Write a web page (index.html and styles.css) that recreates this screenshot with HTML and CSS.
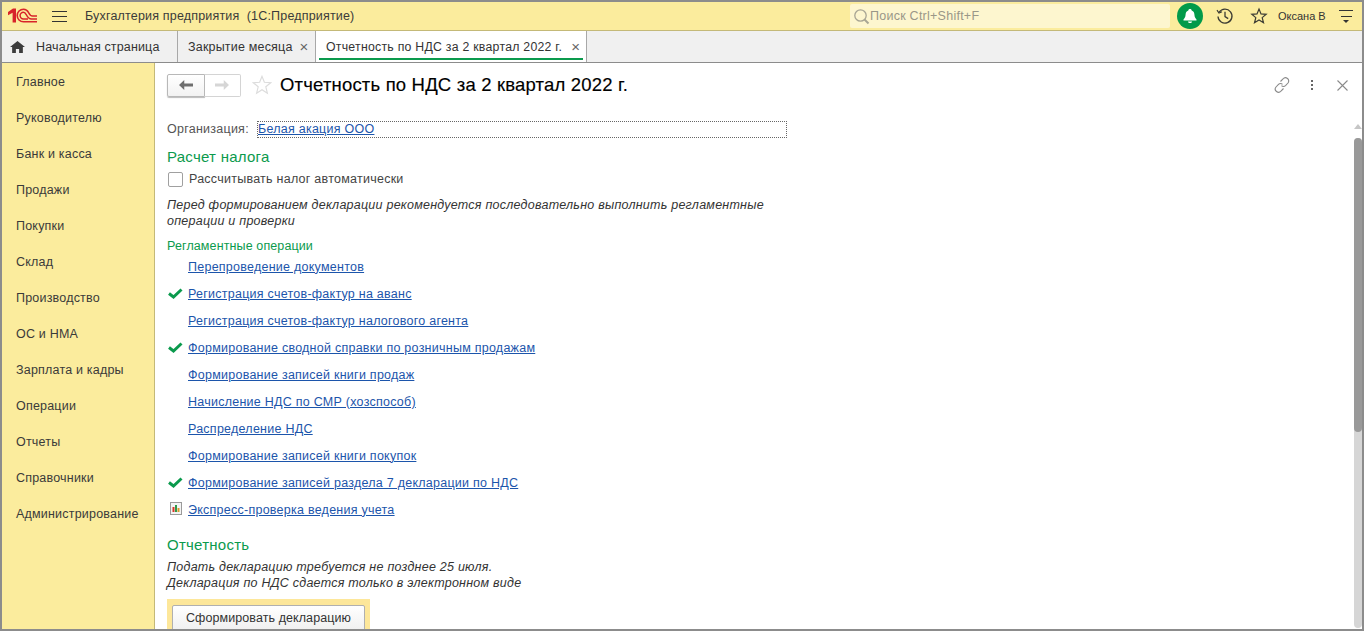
FILE: index.html
```html
<!DOCTYPE html>
<html>
<head>
  <meta charset="utf-8">
  <title>Отчетность по НДС</title>
  <link rel="stylesheet" href="styles.css">
</head>
<body>
  <div class="app">
    <div class="topbar">
      <svg class="logo" width="30" height="16" viewBox="0 0 30 16">
        <path d="M0 4 L5 .5 H8 V14.5 H4.6 V4.8 L0 7.2 Z" fill="#d8232a"/>
        <path d="M29 13.8 H15.5 A6.3 6.3 0 0 1 15.5 1.2 C18 1.2 19.5 2.5 20.5 4.5 C21.5 6.5 22.5 8 24.5 8 H29" fill="none" stroke="#d8232a" stroke-width="1.6"/>
        <path d="M29 11 H23.5 C21 11 19.5 9 18.5 7 C17.5 5.2 17 4.2 15.5 4.2 A3.4 3.4 0 0 0 15.5 11 H20" fill="none" stroke="#d8232a" stroke-width="1.5"/>
      </svg>
      <div class="burger"><span></span><span></span><span></span></div>
      <div class="app-title">Бухгалтерия предприятия&nbsp; (1С:Предприятие)</div>
      <div class="search">
        <svg width="17" height="17" viewBox="0 0 17 17"><circle cx="7.5" cy="7.5" r="5.7" fill="none" stroke="#a8a594" stroke-width="1.3"/><path d="M11.5 11.5 L15.5 15.5" stroke="#a8a594" stroke-width="2"/></svg>
        <span>Поиск Ctrl+Shift+F</span>
      </div>
      <div class="bell">
        <svg width="16" height="16" viewBox="0 0 16 16"><path d="M8 1 C9 1 9.6 1.6 9.7 2.4 C11.6 3 12.3 4.6 12.4 6.5 C12.5 9 13.5 10.4 14.5 11.5 V12.5 H1.5 V11.5 C2.5 10.4 3.5 9 3.6 6.5 C3.7 4.6 4.4 3 6.3 2.4 C6.4 1.6 7 1 8 1 Z M6 13.5 H10 C10 14.6 9 15 8 15 C7 15 6 14.6 6 13.5 Z" fill="#fff"/></svg>
      </div>
      <svg class="history" width="18" height="18" viewBox="0 0 18 18" fill="none" stroke="#3c3c34" stroke-width="1.3"><path d="M3.2 5.2 A7 7 0 1 1 2 9.5"/><path d="M1 3.2 L3 6 L6 4.8" stroke-width="1.2"/><path d="M9 4.8 V9.6 L12.2 11.6"/></svg>
      <svg class="fav" width="18" height="18" viewBox="0 0 18 18"><path d="M9 2 L11 6.9 L16.2 7.3 L12.2 10.6 L13.5 15.8 L9 13 L4.5 15.8 L5.8 10.6 L1.8 7.3 L7 6.9 Z" fill="none" stroke="#3c3c34" stroke-width="1.2"/></svg>
      <div class="user">Оксана В</div>
      <div class="user-menu"><span></span><span></span><i></i></div>
    </div>

    <div class="tabs">
      <div class="tab tab-home">
        <svg width="15" height="12" viewBox="0 0 14 12" preserveAspectRatio="none"><path d="M7 0 L14 6 H12 V12 H8.5 V8 H5.5 V12 H2 V6 H0 Z" fill="#3c3c3c"/></svg>
        <span>Начальная страница</span>
      </div>
      <div class="tab tab-month"><span>Закрытие месяца</span><b>×</b></div>
      <div class="tab tab-active"><span>Отчетность по НДС за 2 квартал 2022 г.</span><b>×</b></div>
    </div>

    <div class="main">
      <div class="sidebar">
        <div class="side-item">Главное</div>
        <div class="side-item">Руководителю</div>
        <div class="side-item">Банк и касса</div>
        <div class="side-item">Продажи</div>
        <div class="side-item">Покупки</div>
        <div class="side-item">Склад</div>
        <div class="side-item">Производство</div>
        <div class="side-item">ОС и НМА</div>
        <div class="side-item">Зарплата и кадры</div>
        <div class="side-item">Операции</div>
        <div class="side-item">Отчеты</div>
        <div class="side-item">Справочники</div>
        <div class="side-item">Администрирование</div>
      </div>

      <div class="content">
        <div class="form-head">
          <div class="nav-btns">
            <div class="nav-btn nav-back">
              <svg width="14" height="10" viewBox="0 0 16 10" preserveAspectRatio="none"><path d="M0 5 L6 0 V3.5 H16 V6.5 H6 V10 Z" fill="#6e6e6e"/></svg>
            </div>
            <div class="nav-btn nav-next">
              <svg width="14" height="10" viewBox="0 0 16 10" preserveAspectRatio="none"><path d="M16 5 L10 0 V3.5 H0 V6.5 H10 V10 Z" fill="#d6d6d6"/></svg>
            </div>
          </div>
          <svg class="form-star" width="20" height="20" viewBox="0 0 22 22"><path d="M11 1.5 L13.6 8 L20.6 8.5 L15.2 13 L16.9 20 L11 16.2 L5.1 20 L6.8 13 L1.4 8.5 L8.4 8 Z" fill="none" stroke="#dcdcdc" stroke-width="1.3"/></svg>
          <h1>Отчетность по НДС за 2 квартал 2022 г.</h1>
          <div class="form-tools">
            <svg width="16" height="16" viewBox="0 0 16 16" fill="none" stroke="#8a8a8a" stroke-width="1.1"><path d="M6.5 4.5 L9 2 A2.8 2.8 0 0 1 14 6 L11.5 8.7 A2.8 2.8 0 0 1 7.5 8.7"/><path d="M9.5 11.5 L7 14 A2.8 2.8 0 0 1 2 10 L4.5 7.3 A2.8 2.8 0 0 1 8.5 7.3"/></svg>
            <div class="dots"><span></span><span></span><span></span></div>
            <svg width="11" height="11" viewBox="0 0 11 11"><path d="M.5 .5 L10.5 10.5 M10.5 .5 L.5 10.5" stroke="#8a8a8a" stroke-width="1.1"/></svg>
          </div>
        </div>

        <div class="org-row">
          <span class="org-label">Организация:</span>
          <div class="org-field"><a href="#">Белая акация ООО</a></div>
        </div>

        <h2 class="section first">Расчет налога</h2>
        <label class="check-row"><span class="checkbox"></span>Рассчитывать налог автоматически</label>
        <p class="note note-top">Перед формированием декларации рекомендуется последовательно выполнить регламентные<br>операции и проверки</p>
        <h3 class="subsection">Регламентные операции</h3>

        <div class="ops">
          <div class="op"><a href="#">Перепроведение документов</a></div>
          <div class="op"><svg class="tick" width="15" height="11" viewBox="0 0 15 11"><path d="M1 5.5 L5.5 9 L13.5 1.5" fill="none" stroke="#0b9a4d" stroke-width="3"/></svg><a href="#">Регистрация счетов-фактур на аванс</a></div>
          <div class="op"><a href="#">Регистрация счетов-фактур налогового агента</a></div>
          <div class="op"><svg class="tick" width="15" height="11" viewBox="0 0 15 11"><path d="M1 5.5 L5.5 9 L13.5 1.5" fill="none" stroke="#0b9a4d" stroke-width="3"/></svg><a href="#">Формирование сводной справки по розничным продажам</a></div>
          <div class="op"><a href="#">Формирование записей книги продаж</a></div>
          <div class="op"><a href="#">Начисление НДС по СМР (хозспособ)</a></div>
          <div class="op"><a href="#">Распределение НДС</a></div>
          <div class="op"><a href="#">Формирование записей книги покупок</a></div>
          <div class="op"><svg class="tick" width="15" height="11" viewBox="0 0 15 11"><path d="M1 5.5 L5.5 9 L13.5 1.5" fill="none" stroke="#0b9a4d" stroke-width="3"/></svg><a href="#">Формирование записей раздела 7 декларации по НДС</a></div>
          <div class="op">
            <svg class="report" width="12" height="13" viewBox="0 0 12 13"><rect x=".5" y=".5" width="11" height="12" fill="#f4f4f4" stroke="#9a9a9a"/><rect x="2.5" y="5" width="2" height="5" fill="#d8372a"/><rect x="5" y="3" width="2" height="7" fill="#2f9a4a"/><rect x="7.5" y="6" width="2" height="4" fill="#d89a2a"/></svg>
            <a href="#">Экспресс-проверка ведения учета</a>
          </div>
        </div>

        <h2 class="section second">Отчетность</h2>
        <p class="note note-bottom">Подать декларацию требуется не позднее 25 июля.<br>Декларация по НДС сдается только в электронном виде</p>
        <div class="btn-wrap"><button class="btn">Сформировать декларацию</button></div>
      </div>

      <div class="scroll">
        <i class="scroll-up"></i>
        <div class="scroll-track"><div class="scroll-thumb"></div></div>
      </div>
    </div>
  </div>
</body>
</html>
```

FILE: styles.css
```css
* {
  box-sizing: border-box;
}

html, body {
  margin: 0;
  padding: 0;
  height: 100%;
  overflow: hidden;
}

body {
  font-family: "Liberation Sans", Arial, sans-serif;
  font-size: 12.5px;
  color: #333;
  letter-spacing: .25px;
}

a {
  color: #1c55ab;
}

.app {
  width: 1364px;
  height: 631px;
  border: 2px solid #8c8c8c;
  display: flex;
  flex-direction: column;
  overflow: hidden;
}

/* top bar */
.topbar {
  flex: 0 0 29px;
  background: #fbec9d;
  border-bottom: 1px solid #c4b978;
  display: flex;
  align-items: center;
  padding-left: 6px;
}

.logo {
  margin-right: 14px;
  flex: none;
}

.burger {
  width: 15px;
  margin-right: 18px;
  display: flex;
  flex-direction: column;
  gap: 4px;
}

.burger span {
  height: 1px;
  background: #333;
  display: block;
}

.app-title {
  width: 765px;
  color: #3a3a3a;
  letter-spacing: .18px;
}

.search {
  width: 320px;
  height: 24px;
  background: #fdf6cf;
  border-radius: 2px;
  display: flex;
  align-items: center;
  padding-left: 3px;
  color: #9a9788;
}

.bell {
  width: 26px;
  height: 26px;
  margin-left: 7px;
  border-radius: 50%;
  background: #029a4a;
  display: flex;
  align-items: center;
  justify-content: center;
}

.history {
  margin-left: 13px;
}

.fav {
  margin-left: 16px;
}

.user {
  margin-left: 10px;
  width: 61px;
  font-size: 11px;
  letter-spacing: 0;
  color: #333;
}

.user-menu {
  width: 14px;
  display: flex;
  flex-direction: column;
  align-items: center;
  gap: 5px;
}

.user-menu span {
  width: 14px;
  height: 1px;
  background: #333;
}

.user-menu span:nth-child(2) {
  width: 11px;
}

.user-menu i {
  border: 3px solid transparent;
  border-top-color: #333;
  border-bottom: 0;
  margin-top: -2px;
}

/* tabs */
.tabs {
  flex: 0 0 32px;
  background: #f0f0f0;
  border-bottom: 1px solid #8c8c8c;
  display: flex;
}

.tab {
  display: flex;
  align-items: center;
  border-right: 1px solid #a8a8a8;
  color: #333;
  position: relative;
}

.tab b {
  font-weight: normal;
  font-size: 15px;
  color: #666;
  letter-spacing: 0;
}

.tab-home {
  width: 176px;
  padding-left: 8px;
  gap: 11px;
  letter-spacing: .14px;
}

.tab-month {
  width: 138px;
  padding-left: 10px;
  gap: 7px;
  letter-spacing: .19px;
}

.tab-active {
  width: 271px;
  padding-left: 10px;
  gap: 9px;
  background: #fff;
  font-size: 12.3px;
}

.tab-active::after {
  content: "";
  position: absolute;
  left: 3px;
  right: 3px;
  bottom: 2px;
  height: 2px;
  background: #0b9a4d;
}

/* body */
.main {
  flex: 1;
  display: flex;
  min-height: 0;
}

.sidebar {
  flex: 0 0 153px;
  background: #fbec9d;
  border-right: 1px solid #c4b978;
  padding-top: 1px;
  letter-spacing: .2px;
}

.side-item {
  height: 36px;
  line-height: 36px;
  padding-left: 14px;
  color: #3a3a3a;
}

.content {
  flex: 1;
  min-width: 0;
  padding: 0 0 0 12px;
  overflow: hidden;
}

.form-head {
  height: 43px;
  display: flex;
  align-items: center;
  padding-top: 1px;
}

.nav-btns {
  display: flex;
  width: 74px;
  height: 23px;
}

.nav-btn {
  flex: 1;
  border: 1px solid #d4d4d4;
  display: flex;
  align-items: center;
  justify-content: center;
  background: #fff;
}

.nav-back {
  border-color: #b8b8b8;
  border-radius: 2px 0 0 2px;
  background: linear-gradient(#fff, #f2f2f2);
  box-shadow: 0 1px 1px #bbb;
}

.nav-next {
  border-left: 0;
  border-radius: 0 2px 2px 0;
}

.form-star {
  margin-left: 11px;
}

h1 {
  margin: 0 0 0 8px;
  font-size: 18.5px;
  font-weight: normal;
  color: #000;
  letter-spacing: .18px;
  flex: 1;
  -webkit-text-stroke: .15px #000;
}

.form-tools {
  display: flex;
  align-items: center;
  margin-right: 4px;
}

.dots {
  display: flex;
  flex-direction: column;
  gap: 2px;
  width: 8px;
  margin: 0 21px 0 18px;
  align-items: center;
}

.dots span {
  width: 2px;
  height: 2px;
  background: #666;
}

.org-row {
  display: flex;
  align-items: center;
  height: 18px;
  margin-top: 14px;
}

.org-label {
  width: 90px;
  color: #555;
}

.org-field {
  width: 530px;
  height: 17px;
  border: 1px dotted #666;
  line-height: 15px;
}

.section {
  margin: 0;
  font-size: 15px;
  font-weight: normal;
  color: #0b9a4d;
  line-height: 18px;
}

.section.first {
  margin-top: 10px;
}

.section.second {
  margin-top: 13px;
}

.check-row {
  display: flex;
  align-items: center;
  height: 18px;
  margin-top: 4px;
  color: #444;
}

.checkbox {
  width: 15px;
  height: 15px;
  border: 1px solid #a0a0a0;
  border-radius: 2px;
  background: #fff;
  margin: 0 6px 0 1px;
}

.note {
  margin: 0;
  font-style: italic;
  line-height: 16px;
  color: #333;
  letter-spacing: .24px;
}

.note-top {
  margin-top: 9px;
}

.note-bottom {
  margin-top: 5px;
}

.subsection {
  margin: 9px 0 0;
  font-size: 12.5px;
  font-weight: normal;
  color: #0b9a4d;
  line-height: 16px;
  letter-spacing: .12px;
}

.ops {
  margin-top: -1px;
}

.op {
  height: 27px;
  display: flex;
  align-items: center;
  padding-left: 21px;
  position: relative;
}

.tick {
  position: absolute;
  left: 1px;
  top: 8px;
}

.report {
  position: absolute;
  left: 3px;
  top: 6px;
}

.btn-wrap {
  width: 203px;
  height: 32px;
  margin-top: 8px;
  background: #fde79a;
  padding: 6px 5px 0;
}

.btn {
  display: block;
  width: 193px;
  height: 26px;
  padding: 0;
  border: 1px solid #b0b0b0;
  border-radius: 2px;
  background: linear-gradient(#fff, #f0f0f0);
  font: inherit;
  letter-spacing: .08px;
  color: #333;
}

/* scrollbar */
.scroll {
  flex: 0 0 10px;
  padding: 61px 0 1px 2px;
  display: flex;
  flex-direction: column;
  align-items: center;
}

.scroll-up {
  border: 4px solid transparent;
  border-bottom: 5px solid #c6c6c6;
  border-top: 0;
  margin-bottom: 9px;
}

.scroll-track {
  flex: 1;
  width: 8px;
  background: #d6d6d6;
  border-radius: 4px;
}

.scroll-thumb {
  height: 294px;
  background: #999;
  border-radius: 4px;
}
```
